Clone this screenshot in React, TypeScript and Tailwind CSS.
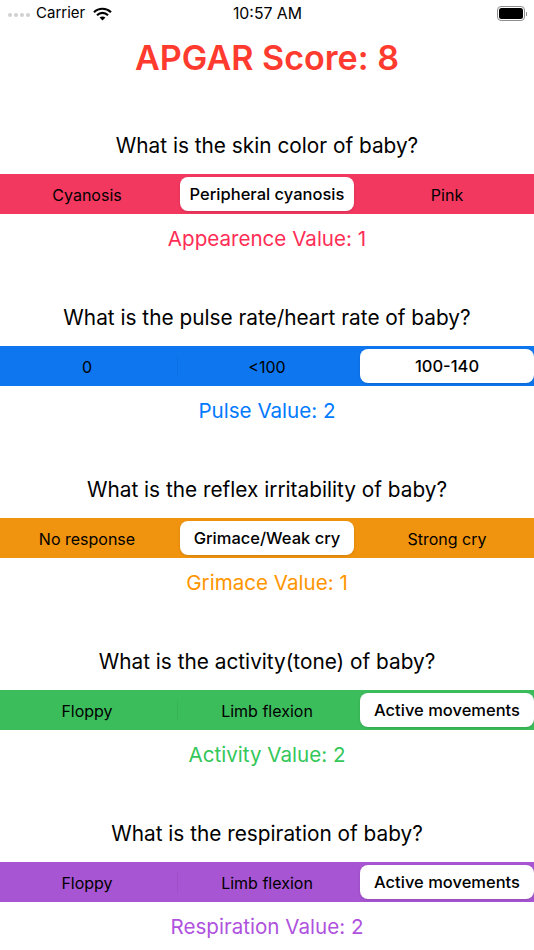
const sections = [
  {
    question: "What is the skin color of baby?",
    options: ["Cyanosis", "Peripheral cyanosis", "Pink"],
    selected: 1,
    bar: "bg-[#f2385f]",
    text: "text-[#ff2d55]",
    value: "Appearence Value: 1",
  },
  {
    question: "What is the pulse rate/heart rate of baby?",
    options: ["0", "<100", "100-140"],
    selected: 2,
    bar: "bg-[#0e76ee]",
    text: "text-[#007aff]",
    value: "Pulse Value: 2",
  },
  {
    question: "What is the reflex irritability of baby?",
    options: ["No response", "Grimace/Weak cry", "Strong cry"],
    selected: 1,
    bar: "bg-[#f0930e]",
    text: "text-[#ff9500]",
    value: "Grimace Value: 1",
  },
  {
    question: "What is the activity(tone) of baby?",
    options: ["Floppy", "Limb flexion", "Active movements"],
    selected: 2,
    bar: "bg-[#3cbd5c]",
    text: "text-[#34c759]",
    value: "Activity Value: 2",
  },
  {
    question: "What is the respiration of baby?",
    options: ["Floppy", "Limb flexion", "Active movements"],
    selected: 2,
    bar: "bg-[#a755d2]",
    text: "text-[#af52de]",
    value: "Respiration Value: 2",
  },
];

function StatusBar() {
  return (
    <div className="flex h-[27px] items-center justify-between pl-[8px] pr-[7px] text-[15px] text-black">
      <div className="flex w-[180px] items-center">
        <div className="flex gap-[2px] pt-[3px]">
          <span className="h-[4px] w-[4px] rounded-full bg-[#d0d0d0]" />
          <span className="h-[4px] w-[4px] rounded-full bg-[#d0d0d0]" />
          <span className="h-[4px] w-[4px] rounded-full bg-[#d0d0d0]" />
          <span className="h-[4px] w-[4px] rounded-full bg-[#d0d0d0]" />
        </div>
        <span className="ml-[6px]">Carrier</span>
        <svg className="ml-[8px]" width="19" height="14" viewBox="0 0 19 14" fill="none" stroke="black">
          <path d="M1 5.2C5.8 .6 13.2 .6 18 5.2" strokeWidth="2.2" />
          <path d="M4 8.2C7.2 5.2 11.8 5.2 15 8.2" strokeWidth="2.2" />
          <path d="M9.5 13.6L6.6 10.6C8.3 9.2 10.7 9.2 12.4 10.6Z" fill="black" stroke="none" />
        </svg>
      </div>
      <span className="text-[15.8px]">10:57 AM</span>
      <div className="flex w-[180px] items-center justify-end">
        <div className="flex h-[15px] w-[28px] items-center rounded-[4px] border border-[#8e8e8e] p-[1px]">
          <div className="h-full w-full rounded-[2.5px] bg-black" />
        </div>
        <div className="ml-[1px] h-[4px] w-[1px] bg-[#8e8e8e]" />
      </div>
    </div>
  );
}

function Segmented({ section }: { section: (typeof sections)[number] }) {
  return (
    <div className={`h-10 overflow-hidden ${section.bar}`}>
      <div className="-mx-[3px] grid h-full grid-cols-3 text-black">
        {section.options.map((option, i) => (
          <div key={i} className="relative flex items-center justify-center px-[3px] py-[3px]">
            {i > 0 && i !== section.selected && i - 1 !== section.selected && (
              <span className="absolute top-[10px] left-0 h-[21px] w-px bg-black/5" />
            )}
            <div
              className={
                i === section.selected
                  ? "flex h-full w-full items-center justify-center whitespace-nowrap rounded-[8px] bg-white pt-px text-[16.5px] font-medium shadow-sm"
                  : "whitespace-nowrap pt-[2px] text-[16px]"
              }
            >
              {option}
            </div>
          </div>
        ))}
      </div>
    </div>
  );
}

export default function App() {
  return (
    <div className="h-[950px] w-[534px] overflow-hidden bg-white font-['Inter','Liberation_Sans',sans-serif]">
      <StatusBar />
      <h1 className="mt-[8px] text-center text-[34.1px] leading-[46px] font-semibold text-[#ff3b30]">
        APGAR Score: 8
      </h1>
      <div className="mt-[50px] flex flex-col gap-[49px]">
        {sections.map((section) => (
          <div key={section.value}>
            <p className="mb-[13px] text-center text-[20.8px] leading-[30px] text-black">{section.question}</p>
            <Segmented section={section} />
            <p className={`mt-[10px] text-center text-[20.6px] leading-[30px] ${section.text}`}>{section.value}</p>
          </div>
        ))}
      </div>
    </div>
  );
}
